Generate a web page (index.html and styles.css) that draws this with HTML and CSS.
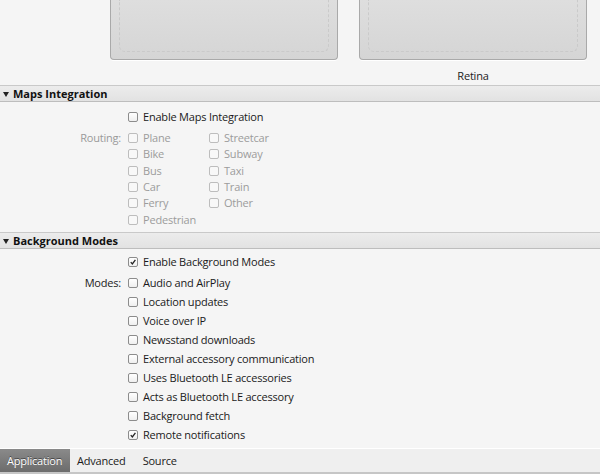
FILE: index.html
```html
<!DOCTYPE html>
<html>
<head>
<meta charset="utf-8">
<link rel="stylesheet" href="styles.css">
</head>
<body>
<div class="page">
  <div class="wells">
    <div class="well-col">
      <div class="well"><div class="dash"></div></div>
      <div class="well-label"></div>
    </div>
    <div class="well-col">
      <div class="well"><div class="dash"></div></div>
      <div class="well-label">Retina</div>
    </div>
  </div>

  <div class="sec-head"><span class="tri"></span>Maps Integration</div>
  <div class="sec-body maps">
    <div class="row first"><span class="lbl"></span><label class="cb"><span class="box"></span>Enable Maps Integration</label></div>
    <div class="row routing">
      <span class="lbl dim">Routing:</span>
      <div class="grid2">
        <label class="cb dis"><span class="box"></span>Plane</label>
        <label class="cb dis"><span class="box"></span>Streetcar</label>
        <label class="cb dis"><span class="box"></span>Bike</label>
        <label class="cb dis"><span class="box"></span>Subway</label>
        <label class="cb dis"><span class="box"></span>Bus</label>
        <label class="cb dis"><span class="box"></span>Taxi</label>
        <label class="cb dis"><span class="box"></span>Car</label>
        <label class="cb dis"><span class="box"></span>Train</label>
        <label class="cb dis"><span class="box"></span>Ferry</label>
        <label class="cb dis"><span class="box"></span>Other</label>
        <label class="cb dis"><span class="box"></span>Pedestrian</label>
      </div>
    </div>
  </div>

  <div class="sec-head"><span class="tri"></span>Background Modes</div>
  <div class="sec-body bg">
    <div class="row first"><span class="lbl"></span><label class="cb"><span class="box on"><svg viewBox="0 0 10 10"><path d="M2.2 5.2 L4.2 7.4 L8 2.2" /></svg></span>Enable Background Modes</label></div>
    <div class="row modes">
      <span class="lbl">Modes:</span>
      <div class="list">
        <label class="cb"><span class="box"></span>Audio and AirPlay</label>
        <label class="cb"><span class="box"></span>Location updates</label>
        <label class="cb"><span class="box"></span>Voice over IP</label>
        <label class="cb"><span class="box"></span>Newsstand downloads</label>
        <label class="cb"><span class="box"></span>External accessory communication</label>
        <label class="cb"><span class="box"></span>Uses Bluetooth LE accessories</label>
        <label class="cb"><span class="box"></span>Acts as Bluetooth LE accessory</label>
        <label class="cb"><span class="box"></span>Background fetch</label>
        <label class="cb"><span class="box on"><svg viewBox="0 0 10 10"><path d="M2.2 5.2 L4.2 7.4 L8 2.2" /></svg></span>Remote notifications</label>
      </div>
    </div>
  </div>

  <div class="spacer"></div>
  <div class="tabs">
    <span class="tab sel">Application</span>
    <span class="tab">Advanced</span>
    <span class="tab">Source</span>
  </div>
</div>
</body>
</html>
```

FILE: styles.css
```css
* { box-sizing: border-box; }
html, body { margin: 0; padding: 0; }
body {
  width: 600px;
  height: 474px;
  overflow: hidden;
  background: #f5f5f5;
  font-family: "Open Sans", "DejaVu Sans", sans-serif;
  font-size: 11px;
  letter-spacing: -0.2px;
  color: #1a1a1a;
}
.page { display: flex; flex-direction: column; height: 474px; }

.wells {
  display: flex;
  gap: 21px;
  padding-left: 110px;
  height: 86px;
  border-bottom: 1px solid #c9c9c9;
}
.well-col { width: 228px; display: flex; flex-direction: column; }
.well {
  height: 60px;
  border: 1px solid #a9a9a9;
  border-top: 0;
  border-radius: 0 0 4px 4px;
  background: linear-gradient(#dedede, #d5d5d5);
  box-shadow: 0 1px 0 #fff;
  padding: 0 8px 7px;
  display: flex;
}
.dash {
  flex: 1;
  border: 1.5px dashed #cacaca;
  border-top: 0;
  border-radius: 0 0 6px 6px;
}
.well-label {
  text-align: center;
  line-height: 13px;
  margin-top: 9px;
  color: #222;
}

.sec-head {
  height: 16px;
  line-height: 15px;
  background: linear-gradient(#ececec, #e2e2e2);
  border-bottom: 1px solid #bdbdbd;
  font-weight: bold;
  letter-spacing: 0;
  color: #111;
  padding-left: 13px;
  position: relative;
}
.tri {
  position: absolute;
  left: 3px;
  top: 6px;
  width: 0; height: 0;
  border-left: 3px solid transparent;
  border-right: 3px solid transparent;
  border-top: 5px solid #222;
}

.sec-body { padding-top: 7px; }
.maps { height: 131px; border-bottom: 1px solid #c9c9c9; }
.bg { padding-top: 5px; }

.row { display: flex; align-items: flex-start; }
.lbl {
  width: 128px;
  padding-right: 7px;
  text-align: right;
  line-height: 16px;
  color: #222;
}
.lbl.dim { color: #9a9a9a; }
.row.first { margin-bottom: 5px; }

.cb {
  display: flex;
  align-items: center;
  height: 16px;
  line-height: 16px;
  white-space: nowrap;
  color: #1a1a1a;
}
.cb.dis { color: #9c9c9c; }
.box {
  width: 10px;
  height: 10px;
  border: 1px solid #8c8c8c;
  border-radius: 2px;
  background: linear-gradient(#ffffff, #efefef);
  margin-right: 5px;
  display: inline-flex;
  flex: none;
}
.cb.dis .box { border-color: #bdbdbd; background: #f8f8f8; }
.box svg { width: 8px; height: 8px; }
.box svg path { fill: none; stroke: #222; stroke-width: 1.6; }

.grid2 {
  display: grid;
  grid-template-columns: 81px auto;
  grid-auto-rows: 16.3px;
}
.grid2 .cb { height: 16.3px; }

.list { display: flex; flex-direction: column; gap: 3px; }

.spacer { flex: 1; }
.tabs {
  height: 26px;
  background: #efefef;
  border-top: 1px solid #fff;
  border-bottom: 2px solid #c6c6c6;
  display: flex;
  align-items: stretch;
}
.tab {
  padding: 0 7px;
  line-height: 23px;
  color: #1a1a1a;
}
.tab.sel {
  background: linear-gradient(#8a8a8a, #6c6c6c);
  color: #fff;
  text-shadow: 0 -1px 0 #444;
  width: 70px;
}
.tab:nth-child(2) { padding-right: 10px; }
```
